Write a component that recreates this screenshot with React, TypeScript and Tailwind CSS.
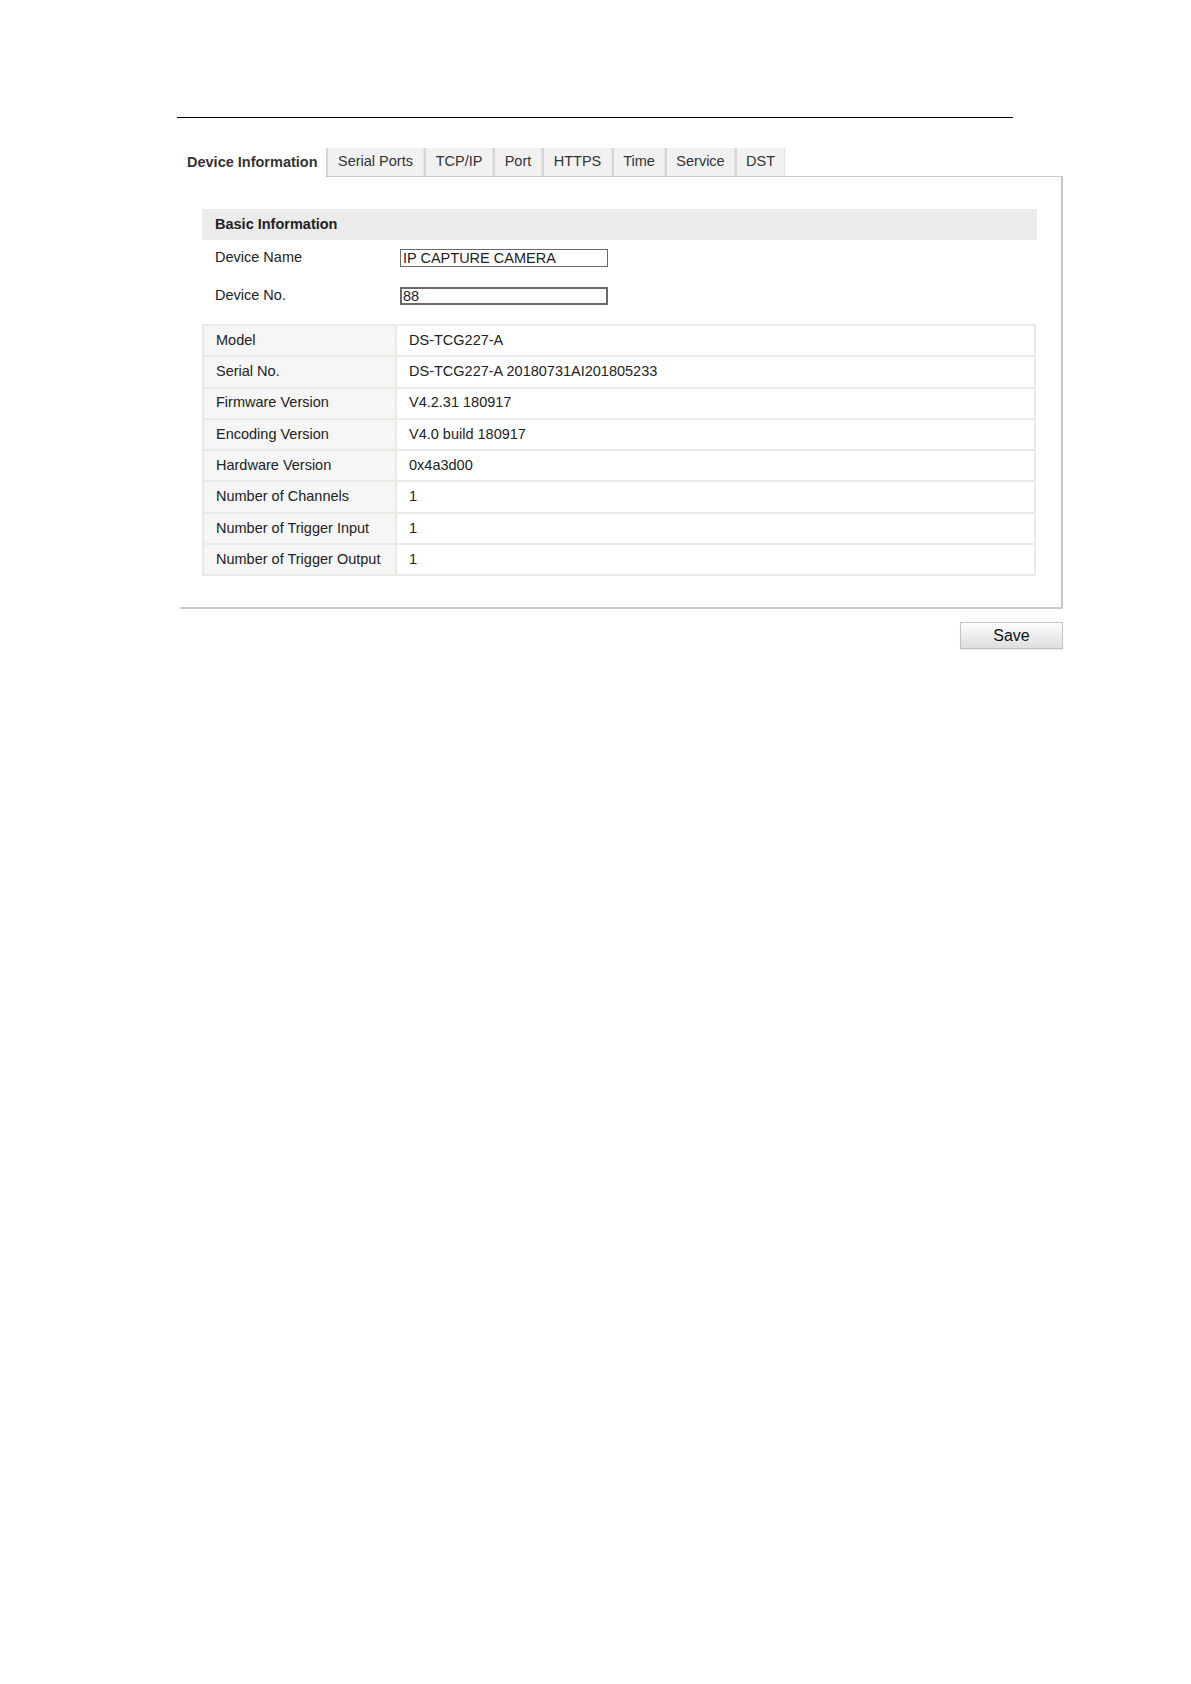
import React from 'react';

const tabs = [
  { label: 'Serial Ports', w: 'w-[98px]' },
  { label: 'TCP/IP', w: 'w-[69px]' },
  { label: 'Port', w: 'w-[49px]' },
  { label: 'HTTPS', w: 'w-[70px]' },
  { label: 'Time', w: 'w-[53px]' },
  { label: 'Service', w: 'w-[70px]' },
  { label: 'DST', w: 'w-[50px]' },
];

const rows = [
  ['Model', 'DS-TCG227-A'],
  ['Serial No.', 'DS-TCG227-A 20180731AI201805233'],
  ['Firmware Version', 'V4.2.31 180917'],
  ['Encoding Version', 'V4.0 build 180917'],
  ['Hardware Version', '0x4a3d00'],
  ['Number of Channels', '1'],
  ['Number of Trigger Input', '1'],
  ['Number of Trigger Output', '1'],
];

export default function App() {
  return (
    <div className="w-[1191px] min-h-[1684px] bg-white text-[14.5px] text-[#222] font-['Liberation_Sans',Arial,sans-serif] pt-[117px]">
      {/* top rule */}
      <div className="ml-[177px] w-[836px] h-px bg-black" />

      <div className="ml-[180px] w-[883px]">
        {/* Tabs */}
        <div className="flex items-end mt-[30px] h-[28px]">
          <div className="relative top-px z-10 w-[146px] h-[29px] pl-[7px] flex items-center bg-white font-bold text-[#333]">
            Device Information
          </div>
          {tabs.map(t => (
            <div
              key={t.label}
              className={`${t.w} h-[28px] flex items-center justify-center bg-[#f1f1f1] border-l-2 border-r border-l-[#d6d6d6] border-r-[#e4e4e4] text-[#333]`}
            >
              {t.label}
            </div>
          ))}
        </div>

        {/* Panel */}
        <div className="h-[433px] border-t border-r-2 border-b-2 border-[#c9c9c9] pt-[32px] pl-[22px] pr-[24px]">
          <div className="h-[31px] bg-[#ebebeb] pl-[13px] flex items-center font-bold">
            Basic Information
          </div>

          <div className="flex items-center mt-[9px] h-[18px]">
            <div className="w-[198px] pl-[13px]">Device Name</div>
            <input
              readOnly
              value="IP CAPTURE CAMERA"
              className="w-[208px] h-[18px] border border-[#6a6a6a] px-[2px] text-[14.5px] leading-none text-[#222] outline-none font-['Liberation_Sans',Arial,sans-serif]"
            />
          </div>
          <div className="flex items-center mt-[20px] h-[18px]">
            <div className="w-[198px] pl-[13px]">Device No.</div>
            <input
              readOnly
              value="88"
              className="w-[208px] h-[18px] border-2 border-[#6a6a6a] px-px text-[14.5px] leading-none text-[#222] outline-none font-['Liberation_Sans',Arial,sans-serif]"
            />
          </div>

          {/* Info table */}
          <div className="mt-[19px] w-[834px] border-2 border-b-0 border-[#ebebe3]">
            {rows.map(([k, v]) => (
              <div key={k} className="flex h-[31.3px] border-b-2 border-[#ebebe3]">
                <div className="w-[193px] shrink-0 bg-[#f6f6f6] border-r-2 border-[#ebebe3] pl-[12px] flex items-center">
                  {k}
                </div>
                <div className="flex-1 pl-[12px] flex items-center">{v}</div>
              </div>
            ))}
          </div>
        </div>

        <div className="flex justify-end mt-[13px]">
          <button className="w-[103px] h-[27px] border border-[#c4c4c4] bg-gradient-to-b from-[#fdfdfd] to-[#dedede] text-[16px] text-[#111] shadow-[0_1px_1px_rgba(0,0,0,0.08)]">
            Save
          </button>
        </div>
      </div>
    </div>
  );
}
